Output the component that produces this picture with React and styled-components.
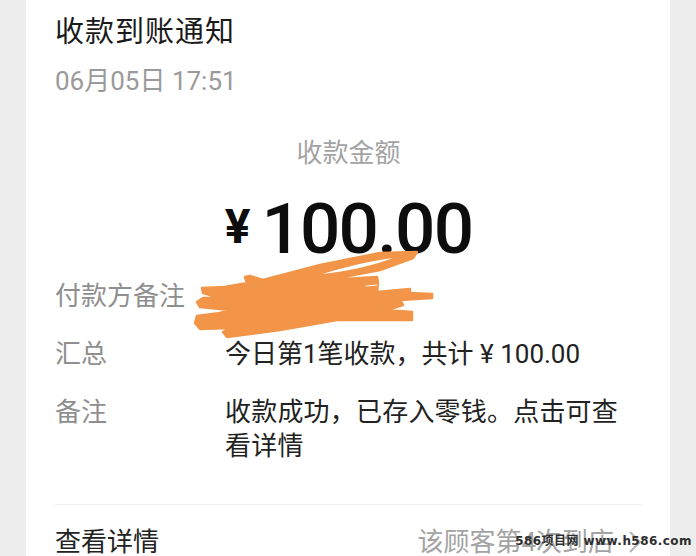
import React from 'react';
import styled, { createGlobalStyle } from 'styled-components';

const Global = createGlobalStyle`
  html, body {
    margin: 0;
    padding: 0;
    background: #ededed;
  }
  body {
    font-family: "Roboto", "Noto Sans CJK SC", sans-serif;
  }
`;

const Page = styled.div`
  position: relative;
  width: 696px;
  height: 556px;
  overflow: hidden;
  background: #ededed;
`;

const Card = styled.div`
  box-sizing: border-box;
  width: 644px;
  height: 556px;
  margin-left: 26px;
  padding: 13px 28px 0 29px;
  background: #ffffff;
`;

const Title = styled.div`
  font-size: 29px;
  line-height: 38px;
  letter-spacing: 1px;
  color: #1a1a1a;
`;

const Time = styled.div`
  margin-top: 13px;
  font-size: 26px;
  line-height: 34px;
  color: #9a9a9a;
`;

const AmountLabel = styled.div`
  margin-top: 38px;
  font-size: 26px;
  line-height: 34px;
  text-align: center;
  color: #a3a3a3;
`;

const Amount = styled.div`
  display: flex;
  align-items: baseline;
  justify-content: center;
  gap: 11px;
  margin-top: 15px;
  height: 88px;
  color: #0d0d0d;
`;

const Currency = styled.span`
  font-size: 48px;
  font-weight: 700;
  line-height: 88px;
  position: relative;
  top: -10px;
`;

const Figure = styled.span`
  font-size: 71px;
  font-weight: 500;
  line-height: 88px;
  letter-spacing: -1.8px;
`;

const Rows = styled.div`
  display: flex;
  flex-direction: column;
  gap: 24px;
  margin-top: 6px;
`;

const Row = styled.div`
  display: grid;
  grid-template-columns: 171px 396px;
  font-size: 26px;
  line-height: 34px;
`;

const Label = styled.div`
  color: #8f8f8f;
`;

const Value = styled.div`
  color: #222222;
  margin-left: -1px;
  letter-spacing: ${(p) => (p.$spaced ? '0.2px' : '0')};
`;

const Divider = styled.div`
  height: 1px;
  margin-top: 41px;
  background: #efefef;
`;

const Footer = styled.div`
  display: flex;
  justify-content: space-between;
  align-items: center;
  margin-top: 19px;
  line-height: 36px;
`;

const FooterLink = styled.div`
  font-size: 26px;
  color: #222222;
`;

const FooterNote = styled.div`
  display: flex;
  align-items: center;
  gap: 14px;
  font-size: 26px;
  color: #a3a3a3;
`;

const Scribble = styled.svg`
  position: absolute;
  left: 190px;
  top: 245px;
`;

const Watermark = styled.div`
  position: absolute;
  right: 4px;
  bottom: 6px;
  font-family: "DejaVu Sans", "Noto Sans CJK SC", sans-serif;
  font-size: 12px;
  font-weight: 700;
  line-height: 18px;
  letter-spacing: 0.45px;
  color: #2e2e2e;
`;

export default function App() {
  return (
    <Page>
      <Global />
      <Card>
        <Title>收款到账通知</Title>
        <Time>06月05日 17:51</Time>
        <AmountLabel>收款金额</AmountLabel>
        <Amount>
          <Currency>¥</Currency>
          <Figure>100.00</Figure>
        </Amount>
        <Rows>
          <Row>
            <Label>付款方备注</Label>
            <Value />
          </Row>
          <Row>
            <Label>汇总</Label>
            <Value>今日第1笔收款，共计 ¥ 100.00</Value>
          </Row>
          <Row>
            <Label>备注</Label>
            <Value $spaced>收款成功，已存入零钱。点击可查看详情</Value>
          </Row>
        </Rows>
        <Divider />
        <Footer>
          <FooterLink>查看详情</FooterLink>
          <FooterNote>
            该顾客第4次到店
            <svg width="14" height="24" viewBox="0 0 14 24" fill="none" stroke="#b5b5b5" strokeWidth="2">
              <path d="M2 2l10 10L2 22" />
            </svg>
          </FooterNote>
        </Footer>
      </Card>
      <Scribble width="250" height="100" viewBox="0 0 250 100" fill="none" strokeLinecap="round" strokeLinejoin="round">
        <path
          fill="#f39548"
          stroke="#f39548"
          strokeWidth="2.5"
          d="M12 43 L35 42 L57 38 L55 32 L60 31 L73 35 L130 20 L190 8 L227 7 L223 13 L190 25 L137 35 L187 32 L188 38 L187 47 L220 44 L220 48 L242 49 L242 53 L210 55 L213 60 L197 65 L222 67 L222 75 L147 75 L90 85 L37 92 L33 87 L40 83 L10 84 L5 78 L7 71 L30 68 L40 65 L10 62 L7 57 L13 53 L27 52 L13 48 Z"
        />
        <path fill="#ffffff" d="M132 29 C155 22 180 16 203 13 C185 20 160 26 132 29 Z" />
        <path stroke="#ffffff" strokeWidth="1" d="M176 41 L187 40" />
      </Scribble>
      <Watermark>586项目网 www.h586.com</Watermark>
    </Page>
  );
}
